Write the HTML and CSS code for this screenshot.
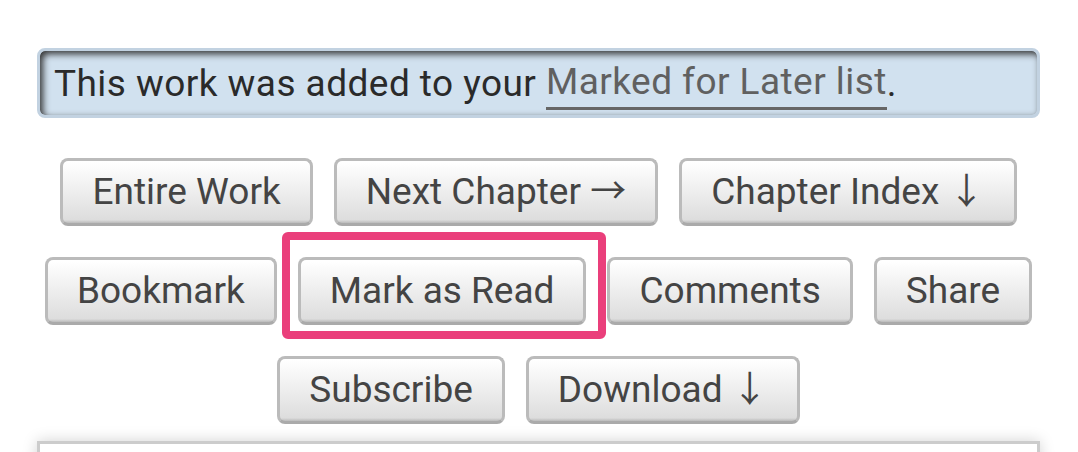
FILE: index.html
```html
<!DOCTYPE html>
<html lang="en">
<head>
<meta charset="utf-8">
<title>Work</title>
<link rel="stylesheet" href="styles.css">
</head>
<body>
<div class="page">
  <p class="flash">This work was added to your <a href="#">Marked for Later list</a>.</p>
  <ul class="actions">
    <li><a class="btn" href="#">Entire Work</a></li>
    <li><a class="btn" href="#">Next Chapter <span class="arrow">→</span></a></li>
    <li><a class="btn" href="#">Chapter Index <span class="arrow">↓</span></a></li>
    <li><a class="btn" href="#">Bookmark</a></li>
    <li class="highlight"><a class="btn" href="#">Mark as Read</a></li>
    <li><a class="btn" href="#">Comments</a></li>
    <li><a class="btn" href="#">Share</a></li>
    <li><a class="btn" href="#">Subscribe</a></li>
    <li><a class="btn" href="#">Download <span class="arrow">↓</span></a></li>
  </ul>
  <div class="panel"></div>
</div>
</body>
</html>
```
FILE: styles.css
```css
html, body {
  margin: 0;
  padding: 0;
  background: #fff;
}
body {
  font-family: Roboto, "Liberation Sans", sans-serif;
  font-size: 37px;
  color: #2a2a2a;
  overflow: hidden;
}
.page {
  padding: 48px 38px 0 37px;
}
.flash {
  margin: 0;
  height: 70px;
  box-sizing: border-box;
  background: #d1e1ef;
  border: 3px solid #c2d2e1;
  border-radius: 8px;
  box-shadow: inset 3px 3px 7px #333;
  padding: 0 14px;
  display: flex;
  align-items: center;
  white-space: pre;
  letter-spacing: 0.45px;
}
.flash a {
  color: #606060;
  text-decoration: none;
  border-bottom: 3px solid #666;
  line-height: 1.2;
  padding-bottom: 2px;
  margin-top: 4px;
}
.actions {
  list-style: none;
  margin: 40px 0 0;
  padding: 0;
  display: flex;
  flex-wrap: wrap;
  justify-content: center;
  column-gap: 21px;
  row-gap: 31px;
}
.actions li {
  display: block;
}
.btn {
  display: block;
  height: 68px;
  box-sizing: border-box;
  line-height: 62px;
  padding: 0 29px;
  color: #444;
  text-decoration: none;
  background: linear-gradient(#fff 2%, #ddd 95%, #bbb 100%);
  border: 3px solid #bbb;
  border-bottom-color: #aaa;
  border-radius: 8px;
}
.arrow {
  font-family: "Noto Sans CJK SC", "DejaVu Sans", sans-serif;
  font-size: 36px;
  line-height: 0;
}
.highlight {
  position: relative;
}
.highlight::after {
  content: "";
  position: absolute;
  left: -16px;
  right: -20px;
  top: -25px;
  bottom: -14px;
  border: 8px solid #ea3f7b;
  border-radius: 6px;
  pointer-events: none;
}
.panel {
  margin-top: 17px;
  height: 60px;
  border: 3px solid #ccc;
  background: #fff;
  box-shadow: 0 0 14px rgba(0,0,0,0.18);
}
```
